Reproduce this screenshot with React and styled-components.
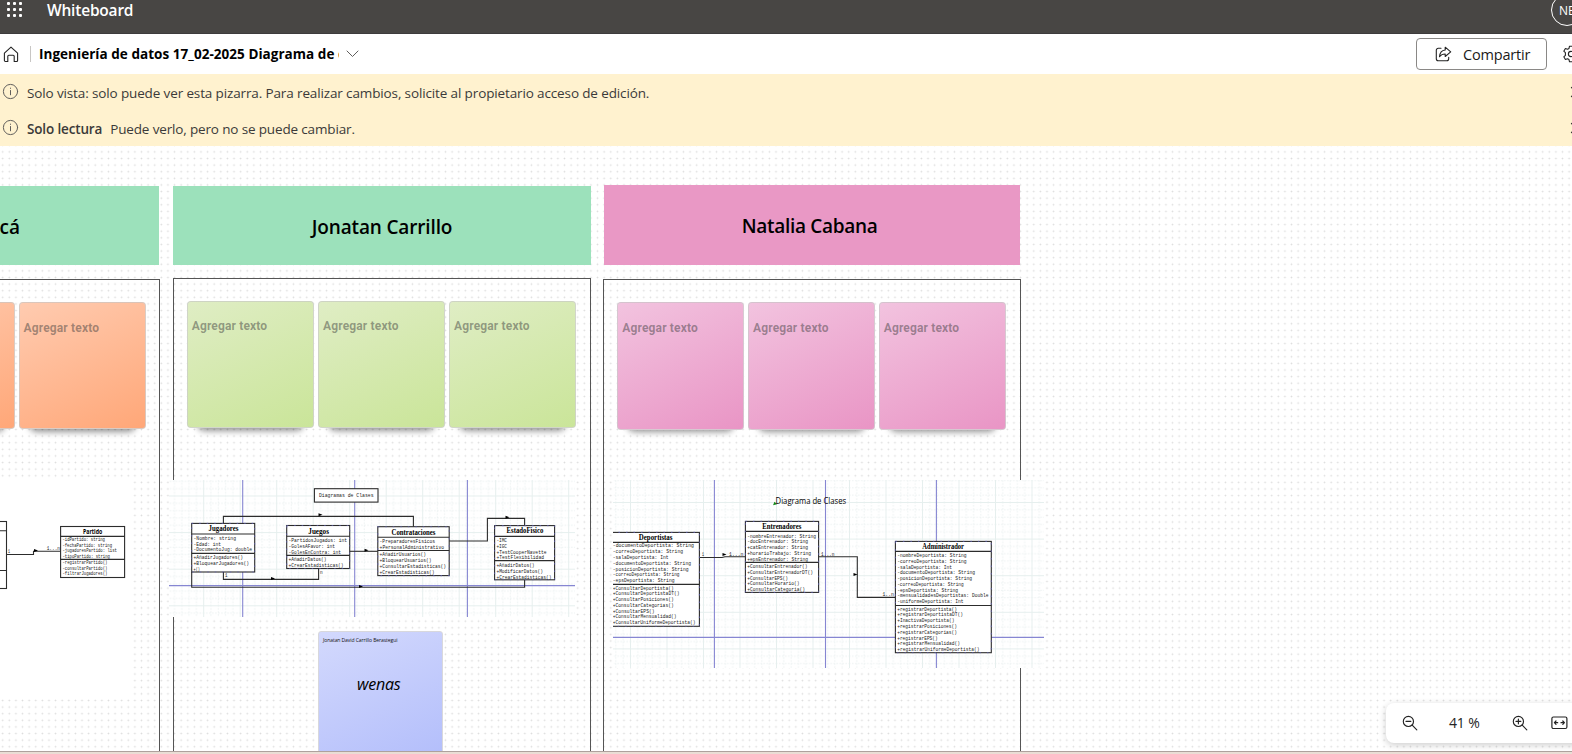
import React from "react";
import styled, { createGlobalStyle } from "styled-components";

const CANVAS_TOP = 146;

const GlobalStyle = createGlobalStyle`
  * { box-sizing: border-box; }
  html, body { margin: 0; padding: 0; overflow: hidden; }
  body { font-family: "Open Sans", "Noto Sans", sans-serif; background: #fff; }
`;

const Page = styled.div`
  display: flex;
  flex-direction: column;
  width: 1572px;
  height: 754px;
  overflow: hidden;
  background: #fff;
`;

const SuiteBar = styled.header`
  display: flex;
  align-items: flex-start;
  flex: 0 0 34px;
  background: #484644;
  border-bottom: 1px solid #3d3b3c;
  color: #fff;
  overflow: hidden;
`;

const Launcher = styled.div`
  display: grid;
  grid-template-columns: repeat(3, 3px);
  gap: 3px;
  margin: 2px 0 0 7px;
`;

const LauncherDot = styled.span`
  width: 3px;
  height: 3px;
  border-radius: 1px;
  background: #fff;
`;

const AppName = styled.span`
  margin-left: 25px;
  font-size: 15.5px;
  line-height: 21px;
  font-weight: 600;
  letter-spacing: ${(p) => p.$track}px;
`;

const Avatar = styled.div`
  flex: none;
  display: flex;
  align-items: center;
  width: 32px;
  height: 32px;
  margin: -6px -11px 0 auto;
  padding-left: 7px;
  border: 1px solid #fff;
  border-radius: 50%;
  font-size: 12px;
`;

const TitleBar = styled.div`
  display: flex;
  align-items: center;
  flex: 0 0 40px;
  padding-left: 3px;
  overflow: hidden;
  color: #111;
`;

const Divider = styled.span`
  width: 1px;
  height: 16px;
  margin: 0 8px 0 11px;
  background: #c8c6c4;
`;

const BoardTitle = styled.span`
  width: 300px;
  overflow: hidden;
  white-space: nowrap;
  font-size: 13.5px;
  line-height: 20px;
  font-weight: 700;
  letter-spacing: ${(p) => p.$track}px;
  color: #000;
`;

const ShareButton = styled.button`
  display: flex;
  align-items: center;
  width: 131px;
  height: 32px;
  margin: 0 15px 0 auto;
  padding: 0 0 0 18px;
  border: 1px solid #8a8886;
  border-radius: 4px;
  background: #fff;
  font: 400 14.5px "Open Sans", sans-serif;
  color: #1b1a19;
  gap: 11px;
  letter-spacing: ${(p) => p.$track}px;
`;

const Glyph = styled.svg`
  flex: none;
  fill: none;
  stroke: ${(p) => p.$color || "#242424"};
  stroke-width: ${(p) => p.$weight || 1.1};
  stroke-linecap: round;
  stroke-linejoin: round;
  margin-left: ${(p) => (p.$end ? "auto" : `${p.$ml || 0}px`)};
  margin-top: ${(p) => p.$mt || 0}px;
  margin-right: ${(p) => p.$mr || 0}px;
`;

const Banner = styled.div`
  display: flex;
  align-items: center;
  flex: 0 0 36px;
  padding: 2px 0 0 2px;
  background: #fff2cf;
  color: #3b3a39;
  font-size: 13.5px;
  overflow: hidden;
  white-space: nowrap;
`;

const BannerText = styled.span`
  margin-left: ${(p) => p.$ml}px;
  font-weight: ${(p) => (p.$strong ? 600 : 400)};
  letter-spacing: ${(p) => p.$track}px;
`;

const Canvas = styled.main`
  position: relative;
  flex: 1;
  overflow: hidden;
  background-color: #fff;
  background-image: radial-gradient(circle at 50% 50%, #dcdcdc 0.5px, transparent 1.2px);
  background-size: 6.615px 6.615px;
  background-position: -0.6px 2.6px;
`;

const Placed = styled.div`
  position: absolute;
  left: ${(p) => p.$x}px;
  top: ${(p) => p.$y - CANVAS_TOP}px;
  width: ${(p) => p.$w}px;
  height: ${(p) => p.$h}px;
`;

const NameCard = styled(Placed)`
  display: flex;
  align-items: center;
  justify-content: ${(p) => (p.$tail ? "flex-end" : "center")};
  padding-top: 2px;
  padding-right: ${(p) => p.$tail || 0}px;
  background: ${(p) => p.$fill};
  color: #000;
  font-size: 19px;
  font-weight: 600;
  letter-spacing: ${(p) => p.$track}px;
`;

const Frame = styled(Placed)`
  border: 1px solid #555;
`;

const StickyNote = styled(Placed)`
  padding: ${(p) => p.$pad}px 0 0 4px;
  border-radius: 4px;
  border: 1px solid rgba(205, 205, 205, 0.75);
  background: linear-gradient(155deg, ${(p) => p.$from}, ${(p) => p.$to});
  background-clip: border-box;
  color: rgba(60, 60, 60, 0.48);
  font: 700 12px/18px Roboto, sans-serif;
  letter-spacing: 0.15px;
  white-space: nowrap;
`;

const NoteShadow = styled(Placed)`
  border-radius: 8px;
  box-shadow: 0 4px 6px rgba(0, 0, 0, 0.42);
`;

const AuthorNote = styled(Placed)`
  border-radius: 3px 3px 0 0;
  border: 1px solid #d8d8dc;
  background: linear-gradient(155deg, #d3d9fd, #b3befb);
  color: #111;
  display: flex;
  flex-direction: column;
  align-items: center;
`;

const Author = styled.span`
  align-self: flex-start;
  margin: 4px 0 0 4px;
  font-size: 5px;
  line-height: 9px;
  white-space: nowrap;
  letter-spacing: -0.07px;
`;

const Handwriting = styled.span`
  margin: 24px 3px 0 0;
  font: italic 400 16px/30px "Open Sans", sans-serif;
  letter-spacing: -0.2px;
  color: #000;
`;

const DiagramLayer = styled.svg`
  position: absolute;
  left: 0;
  top: 0;
`;

const ZoomBar = styled(Placed)`
  display: flex;
  align-items: center;
  padding-left: 16px;
  border-radius: 8px 0 0 8px;
  background: #fff;
  box-shadow: 0 2px 7px rgba(0, 0, 0, 0.2);
  overflow: visible;
`;

const ZoomValue = styled.span`
  width: 32px;
  margin: -1px 31px 0 31px;
  font-size: 14px;
  color: #242424;
  letter-spacing: -0.15px;
  white-space: nowrap;
`;

const BottomEdge = styled.footer`
  flex: 0 0 3px;
  background: #eaddd5;
  border-top: 1px solid #aea19d;
`;

const InfoIcon = () => (
  <Glyph width="17" height="17" viewBox="0 0 17 17" $color="#605e5c" $weight={1} $mt={-4}>
    <circle cx="8.5" cy="8.5" r="7.1" />
    <path d="M8.5 7.5v4.3M8.5 5.1v.3" />
  </Glyph>
);

const CloseIcon = () => (
  <Glyph width="12" height="12" viewBox="0 0 12 12" $color="#3b3a39" $weight={1.2} $end $mt={-3} $mr={-10}>
    <path d="M1.5 1.5l9 9M10.5 1.5l-9 9" />
  </Glyph>
);

const Magnifier = ({ plus, ml }) => (
  <Glyph width="16" height="16" viewBox="0 0 16 16" $ml={ml} $weight={1.15}>
    <circle cx="6.4" cy="6.4" r="5.1" />
    <path d="M10.2 10.2l4.6 4.6M4 6.4h4.8" />
    {plus && <path d="M6.4 4v4.8" />}
  </Glyph>
);

const LINE = "#2c2c2c";

const Label = ({ x, y, to, children, size = 5, bold, family, color = "#222" }) => (
  <text
    x={x}
    y={y}
    textLength={to - x}
    lengthAdjust="spacingAndGlyphs"
    fontFamily={family || "'Liberation Mono', monospace"}
    fontSize={size}
    fontWeight={bold ? 700 : 400}
    fill={color}
  >
    {children}
  </text>
);

function ClassBox({ x, r, top, bottom, seps, title, rows, handles, face = "'Liberation Serif', serif" }) {
  return (
    <g>
      <rect x={x} y={top} width={r - x} height={bottom - top} fill="#fff" stroke={LINE} strokeWidth="1.1" />
      {seps.map((s) => (
        <line key={s} x1={x} x2={r} y1={s} y2={s} stroke={LINE} strokeWidth="1.1" />
      ))}
      {handles && (
        <rect x={x} y={top} width={r - x} height={bottom - top} fill="none" stroke="#6464c8" strokeOpacity=".6" strokeWidth="1.1" strokeDasharray="1.5 6" />
      )}
      {title && (
        <Label x={title[1]} y={title[3]} to={title[2]} size={7.2} bold family={face} color="#000">
          {title[0]}
        </Label>
      )}
      {rows.map(([t, y, to], i) => (
        <Label key={i} x={x + 1.8} y={y} to={to}>
          {t}
        </Label>
      ))}
    </g>
  );
}

const Wire = ({ d }) => <path d={d} fill="none" stroke={LINE} strokeWidth="1.1" />;
const Arrow = ({ x, y }) => <path d={`M${x - 2} ${y - 1.5}l4 1.5l-4 1.5z`} fill="#000" />;

function GridSheet({ id, x, y, w, h, ox, oy, vs, hs }) {
  return (
    <g>
      <defs>
        <pattern id={id} x={ox} y={oy} width="36.5" height="36.6" patternUnits="userSpaceOnUse">
          {[1, 2, 3, 4].map((i) => (
            <path
              key={i}
              d={`M${i * 7.3 + 0.5} 0V36.6M0 ${i * 7.32 + 0.5}H36.5`}
              stroke="#e6eeee"
              strokeWidth=".8"
              strokeDasharray="1.5 1.5"
            />
          ))}
          <path d="M.5 0V36.6M0 .5H36.5" stroke="#e6efee" strokeWidth="1" />
        </pattern>
      </defs>
      <rect x={x} y={y} width={w} height={h} fill="#fff" />
      <rect x={x} y={y} width={w} height={h} fill={`url(#${id})`} />
      {vs.map((v) => (
        <line key={v} x1={v} x2={v} y1={y} y2={y + h} stroke="#8686d2" strokeWidth="1.1" />
      ))}
      <line x1={x} x2={x + w} y1={hs} y2={hs} stroke="#8686d2" strokeWidth="1.1" />
    </g>
  );
}

const MatchDiagram = () => (
  <g>
    <rect x="0" y="478" width="132" height="221" fill="#fff" />
    <ClassBox x={-60} r={6.5} top={521.5} bottom={588.5} seps={[530.8, 570.5]} rows={[]} />
    <ClassBox
      face="'Open Sans', sans-serif"
      x={60.6} r={124.6} top={526.5} bottom={577.5} seps={[536.4, 559.4]}
      title={["Partido", 83, 102.3, 533.8]}
      rows={[
        ["-idPartido: string", 541.2, 105],
        ["-fechaPartido: string", 546.8, 112],
        ["-jugadoresPartido: list", 552.2, 117],
        ["-tipoPartido: string", 557.6, 110],
        ["-registrarPartido()", 564.4, 107.5],
        ["-consultarPartido()", 569.9, 107.5],
        ["-filtrarJugadores()", 575.3, 107.5],
      ]}
    />
    <Wire d="M6.5 554.5H33.5V551.3H60.5" />
    <Arrow x={36} y={550.5} />
    <Label x={8} y={553} to={10}>1</Label>
    <Label x={46.7} y={550.3} to={60}>1...n</Label>
  </g>
);

const PlayersDiagram = () => (
  <g>
    <GridSheet id="gridA" x={169} y={480} w={406} h={137} ox={203.2} oy={495.5} vs={[242.7, 354.7, 467.4]} hs={585.6} />
    <rect x="314.4" y="488.7" width="63.6" height="13.4" fill="#fff" stroke={LINE} strokeWidth="1.1" />
    <Label x={319} y={497.3} to={373.5}>Diagramas de Clases</Label>
    <Wire d="M223.4 523V516.4H413.4V527" />
    <Wire d="M223.4 572V579.4H318.6V568" />
    <Wire d="M349.7 551.3H378" />
    <Wire d="M191.7 572V587.3H524.6V580" />
    <Wire d="M449 541H487.4V518.4H524.6V526" />
    <Arrow x={320.5} y={514.8} />
    <Arrow x={273} y={578.4} />
    <Arrow x={366.5} y={550.2} />
    <Arrow x={361} y={586.4} />
    <Arrow x={507.5} y={517.2} />
    <Label x={225} y={577} to={227.5}>1</Label>
    <Label x={320} y={573.5} to={322.7}>n</Label>
    <ClassBox
      handles x={191.7} r={254.7} top={523.4} bottom={572} seps={[534, 553.4]}
      title={["Jugadores", 208.5, 238.5, 531.4]}
      rows={[
        ["-Nombre: string", 539.7, 236],
        ["-Edad: int", 545.5, 221],
        ["-DocumentoJug: double", 551.3, 252],
        ["+AñadirJugadores()", 558.8, 243],
        ["+BloquearJugadores()", 564.5, 249],
        ["+()", 570.5, 200],
      ]}
    />
    <ClassBox
      handles x={286.7} r={349.7} top={525.5} bottom={568.5} seps={[536.2, 555.4]}
      title={["Juegos", 308.3, 329, 533.8]}
      rows={[
        ["-PartidosJugados: int", 542, 347],
        ["-GolesAFavor: int", 547.7, 335],
        ["-GolesEnContra: int", 553.5, 341],
        ["+AñadirDatos()", 561, 326.5],
        ["+CrearEstadisticas()", 567, 343.5],
      ]}
    />
    <ClassBox
      handles x={377.8} r={449.2} top={526.7} bottom={575.6} seps={[537.3, 550.5]}
      title={["Contrataciones", 391.5, 435.5, 534.6]}
      rows={[
        ["-PreparadoresFisicos", 543.2, 435],
        ["+PersonalAdministrativo", 549, 444],
        ["+AñadirUsuarios()", 556.4, 426],
        ["+BloquearUsuarios()", 562.2, 431.5],
        ["+ConsultarEstadisticas()", 568, 446],
        ["+CrearEstadisticas()", 574, 434.5],
      ]}
    />
    <ClassBox
      handles x={494.6} r={554.6} top={525.6} bottom={579.8} seps={[536.4, 560.6]}
      title={["EstadoFisico", 506.5, 543.3, 533.4]}
      rows={[
        ["-IMC", 542, 507],
        ["+IGC", 547.8, 507],
        ["+TestCooperNavette", 553.6, 546.5],
        ["+TestFlexibilidad", 559.2, 544],
        ["+AñadirDatos()", 567, 534.6],
        ["+ModificarDatos()", 572.7, 543],
        ["+CrearEstadisticas()", 578.6, 551.5],
      ]}
    />
  </g>
);

const SportsDiagram = () => (
  <g>
    <GridSheet id="gridB" x={613} y={480} w={431} h={188} ox={630} oy={502} vs={[714.4, 825.5, 936.4]} hs={637.4} />
    <path d="M773 505.2l1.500-3.400 2.500 2.400z" fill="#138a1c" />
    <Label x={775.6} y={503.7} to={846.2} size={8.4} family="'Open Sans', sans-serif" color="#000">
      Diagrama de Clases
    </Label>
    <Wire d="M699.5 557.5H722L725 556.7H745" />
    <Wire d="M818.7 556.7H857.3V597.4H895" />
    <Arrow x={724.5} y={554.6} />
    <Arrow x={855.5} y={574.5} />
    <Label x={702} y={555.5} to={704}>1</Label>
    <Label x={729} y={555.5} to={743.5}>1...n</Label>
    <Label x={821} y={555.5} to={834.5}>1...n</Label>
    <Label x={882.5} y={596} to={894}>1..n</Label>
    <svg x="613" y="520" width="90" height="120" viewBox="613 520 90 120">
      <ClassBox
        handles x={611} r={699.4} top={532.4} bottom={626.3} seps={[542.4, 584.4]}
        title={["Deportistas", 638.8, 672.5, 539.7]}
        rows={[
          ["-documentoDeportista: String", 547.4, 694],
          ["-correoDeportista: String", 553.2, 683],
          ["-salaDeportista: Int", 559, 668.5],
          ["-documentoDeportista: String", 564.8, 691],
          ["-posicionDeportista: String", 570.5, 688.5],
          ["-correoDeportista: String", 576.3, 679.5],
          ["-epsDeportista: String", 582, 674.5],
          ["+ConsultarDeportista()", 589.5, 673.7],
          ["+ConsultarDeportistaDT()", 595.3, 679.5],
          ["+ConsultarPosiciones()", 601, 673.7],
          ["+ConsultarCategorias()", 606.8, 673.7],
          ["+ConsultarEPS()", 612.6, 654.5],
          ["+ConsultarMensualidad()", 618.4, 676.5],
          ["+ConsultarUniformeDeportista()", 624.2, 695.5],
        ]}
      />
    </svg>
    <ClassBox
      handles x={745.4} r={818.6} top={521.4} bottom={592.4} seps={[531.4, 562.4]}
      title={["Entrenadores", 762.3, 801.3, 528.8]}
      rows={[
        ["-nombreEntrenador: String", 537.6, 816],
        ["-docEntrenador: String", 543.4, 808],
        ["+catEntrenador: String", 549.2, 808],
        ["+horarioTrabajo: String", 555, 811],
        ["+epsEntrenador: String", 560.7, 808],
        ["+ConsultarEntrenador()", 567.8, 807.5],
        ["+ConsultarEntrenadorDT()", 573.5, 813],
        ["+ConsultarEPS()", 579.5, 788],
        ["+ConsultarHorario()", 585.2, 799.5],
        ["+ConsultarCategoria()", 591, 805],
      ]}
    />
    <ClassBox
      handles x={895.4} r={991.3} top={541.4} bottom={652.7} seps={[551.4, 605.5]}
      title={["Administrador", 922.3, 964, 548.9]}
      rows={[
        ["-nombreDeportista: String", 557, 966.5],
        ["-correoDeportista: String", 562.8, 966.5],
        ["-salaDeportista: Int", 568.6, 952],
        ["-documentoDeportista: String", 574.4, 975],
        ["-posicionDeportista: String", 580.2, 972],
        ["-correoDeportista: String", 586, 963.7],
        ["-epsDeportista: String", 591.6, 958],
        ["-mensualidadesDeportistas: Double", 597.4, 988.5],
        ["-uniformeDeportista: Int", 603.2, 963.5],
        ["+registrarDeportista()", 610.5, 957],
        ["+registrarDeportistaDT()", 616.4, 963],
        ["+InactivaDeportista()", 622.2, 954.5],
        ["+registrarPosiciones()", 628, 957],
        ["+registrarCategorias()", 633.8, 957],
        ["+registrarEPS()", 639.6, 937.7],
        ["+registrarMensualidad()", 645.2, 960],
        ["+registrarUniformeDeportista()", 651, 979.5],
      ]}
    />
  </g>
);

const NOTES = [
  { x: -112.5, y: 301.5, pad: 16, from: "#ffcbb0", to: "#ffa778" },
  { x: 18.5, y: 301.5, pad: 16, from: "#ffcbb0", to: "#ffa778" },
  { x: 186.7, y: 300.5, pad: 15, from: "#dfedc4", to: "#cae599" },
  { x: 318, y: 300.5, pad: 15, from: "#dfedc4", to: "#cae599" },
  { x: 449, y: 300.5, pad: 15, from: "#dfedc4", to: "#cae599" },
  { x: 617.3, y: 302, pad: 16, from: "#f2c3df", to: "#e995c5" },
  { x: 748, y: 302, pad: 16, from: "#f2c3df", to: "#e995c5" },
  { x: 878.7, y: 302, pad: 16, from: "#f2c3df", to: "#e995c5" },
];

export default function App() {
  return (
    <Page>
      <GlobalStyle />
      <SuiteBar>
        <Launcher>
          {Array.from({ length: 9 }, (_, i) => (
            <LauncherDot key={i} />
          ))}
        </Launcher>
        <AppName $track={-0.2}>Whiteboard</AppName>
        <Avatar>NE</Avatar>
      </SuiteBar>

      <TitleBar>
        <Glyph width="16" height="17" viewBox="0 0 16 17">
          <path d="M1.4 7.2L8 1.2l6.6 6v7.3a1 1 0 0 1-1 1h-2.4V10.3a1 1 0 0 0-1-1H5.8a1 1 0 0 0-1 1v5.2H2.4a1 1 0 0 1-1-1z" />
        </Glyph>
        <Divider />
        <BoardTitle $track={0.04}>Ingeniería de datos 17_02-2025 Diagrama de clases</BoardTitle>
        <Glyph width="13" height="8" viewBox="0 0 13 8" $ml={7} $color="#605e5c" $weight={1}>
          <path d="M1 1l5.5 5.5L12 1" />
        </Glyph>
        <ShareButton $track={-0.18}>
          <Glyph width="17" height="16" viewBox="0 0 17 16">
            <path d="M6 2.2H3.3a2 2 0 0 0-2 2v8.5a2 2 0 0 0 2 2h8.4a2 2 0 0 0 2-2v-1.5" />
            <path d="M10.2 1.2l5.5 4.7-5.5 4.6V8c-2.7 0-4.3.8-5.7 2.7.3-3.7 2.2-6.3 5.7-6.7z" />
          </Glyph>
          Compartir
        </ShareButton>
        <Glyph width="18" height="18" viewBox="0 0 18 18" $mr={-8}>
          <circle cx="9" cy="9" r="2.6" />
          <path d="M7.5 1.2h3l.5 2.2 1.5.8 2.1-.7 1.6 2.7-1.6 1.5v2.6l1.6 1.5-1.6 2.7-2.1-.7-1.5.8-.5 2.2h-3L7 14.6l-1.5-.8-2.1.7-1.6-2.7 1.6-1.5V7.7L1.8 6.2l1.6-2.7 2.1.7L7 3.4z" />
        </Glyph>
      </TitleBar>

      <Banner>
        <InfoIcon />
        <BannerText $ml={8} $track={-0.13}>
          Solo vista: solo puede ver esta pizarra. Para realizar cambios, solicite al propietario acceso de edición.
        </BannerText>
        <CloseIcon />
      </Banner>
      <Banner>
        <InfoIcon />
        <BannerText $ml={8} $strong $track={-0.15}>Solo lectura</BannerText>
        <BannerText $ml={8} $track={-0.15}>Puede verlo, pero no se puede cambiar.</BannerText>
        <CloseIcon />
      </Banner>

      <Canvas>
        <NameCard $x={-258} $y={186.4} $w={417} $h={78.6} $fill="#9ce1bb" $tail={139}>
          Bacá
        </NameCard>
        <NameCard $x={173} $y={186} $w={418} $h={79} $fill="#9ce1bb" $track={-0.15}>Jonatan Carrillo</NameCard>
        <NameCard $x={603.6} $y={185} $w={416.4} $h={80} $fill="#e998c5" $track={-0.3} $tail={142.5}>Natalia Cabana</NameCard>
        <Frame $x={-258} $y={279} $w={418} $h={520} />
        <Frame $x={173} $y={278} $w={418} $h={520} />
        <Frame $x={603} $y={279} $w={418} $h={520} />
        {NOTES.map((n) => (
          <React.Fragment key={n.x}>
            <NoteShadow $x={n.x + 10} $y={n.y + 100} $w={107} $h={26} />
            <StickyNote $x={n.x} $y={n.y} $w={127} $h={127.5} $from={n.from} $to={n.to} $pad={n.pad}>
              Agregar texto
            </StickyNote>
          </React.Fragment>
        ))}
        <DiagramLayer width="1572" height="605" viewBox="0 146 1572 605">
          <MatchDiagram />
          <PlayersDiagram />
          <SportsDiagram />
        </DiagramLayer>
        <AuthorNote $x={318} $y={630.5} $w={124.5} $h={127}>
          <Author>Jonatan David Carrillo Berastegui</Author>
          <Handwriting>wenas</Handwriting>
        </AuthorNote>
        <ZoomBar $x={1386} $y={703} $w={200} $h={40}>
          <Magnifier />
          <ZoomValue>41 %</ZoomValue>
          <Magnifier plus />
          <Glyph width="17" height="14" viewBox="0 0 17 14" $ml={23} $weight={1.2}>
            <rect x=".9" y="1" width="15" height="11.5" rx="1.5" />
            <path d="M3.5 6.7h3.2M10 6.7h3.2M5 5L3.4 6.7 5 8.4M11.8 5l1.6 1.7-1.6 1.7" />
          </Glyph>
        </ZoomBar>
      </Canvas>
      <BottomEdge />
    </Page>
  );
}
